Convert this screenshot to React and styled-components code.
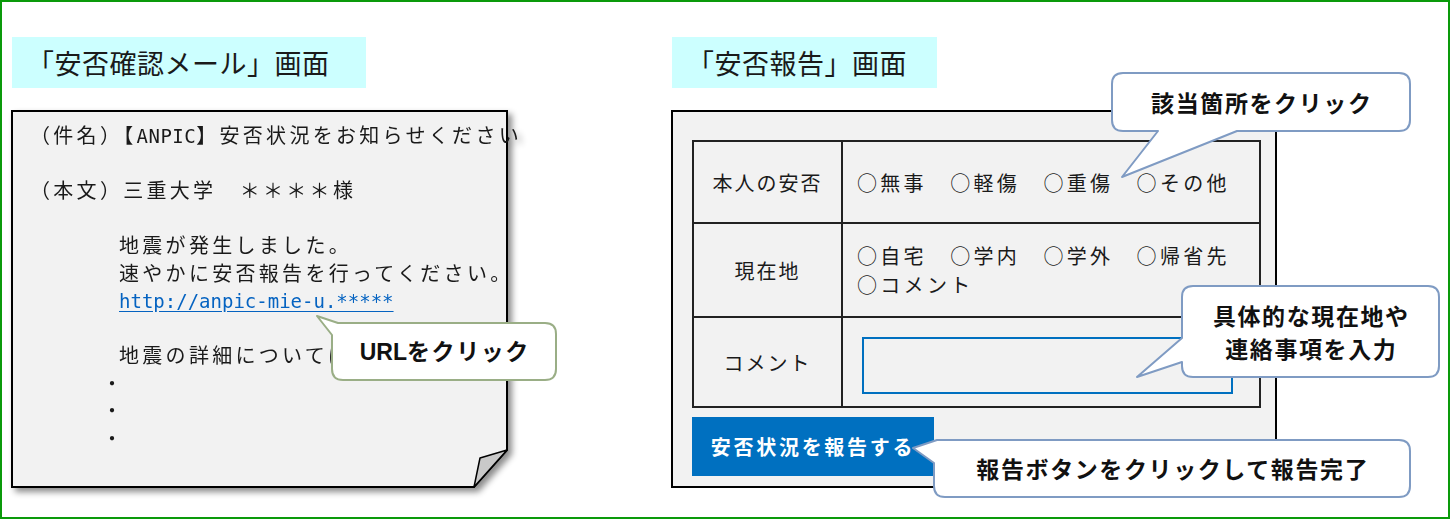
import React from "react";
import styled, { createGlobalStyle } from "styled-components";

const GlobalStyle = createGlobalStyle`
  body {
    margin: 0;
    background: #fff;
    font-family: "Noto Sans CJK JP", "Noto Sans", sans-serif;
    color: #1a1a1a;
  }
`;

const JP = `"Noto Sans CJK JP", "Noto Sans", sans-serif`;

function bubblePath(w, h, r, tail) {
  const { side, a, b, x, y } = tail;
  let d = side === "corner" ? `M ${b} 0` : `M ${r} 0`;
  d += ` L ${w - r} 0 Q ${w} 0 ${w} ${r} L ${w} ${h - r} Q ${w} ${h} ${w - r} ${h}`;
  if (side === "bottom") d += ` L ${b} ${h} L ${x} ${y} L ${a} ${h}`;
  d += ` L ${r} ${h} Q 0 ${h} 0 ${h - r}`;
  if (side === "left") d += ` L 0 ${b} L ${x} ${y} L 0 ${a} L 0 ${r} Q 0 0 ${r} 0 Z`;
  else if (side === "corner") d += ` L 0 ${a} L ${x} ${y} Z`;
  else d += ` L 0 ${r} Q 0 0 ${r} 0 Z`;
  return d;
}

function Bubble({ x, y, w, h, tail, stroke, children }) {
  return (
    <BubbleBox style={{ left: x - 2, top: y - 2, width: w, height: h }}>
      <BubbleShape width={w} height={h}>
        <path d={bubblePath(w, h, 11, tail)} fill="#fff" stroke={stroke} strokeWidth="2" strokeLinejoin="round" />
      </BubbleShape>
      <BubbleText>{children}</BubbleText>
    </BubbleBox>
  );
}

export default function App() {
  return (
    <>
      <GlobalStyle />
      <Frame>
        <Column>
          <Title $w={354}>「安否確認メール」画面</Title>
          <Mail>
            <Paper width="497" height="378">
              <path d="M1 1 L496 1 L496 340 L463 377 L1 377 Z" fill="#f2f2f2" stroke="#000" strokeWidth="2" />
              <path d="M496 340 L469 348 L463 377 Z" fill="#c9c9c9" stroke="#000" strokeWidth="1.5" strokeLinejoin="round" />
            </Paper>
            <MailBody>
              <Line>（件名）【<Mono>ANPIC</Mono>】安否状況をお知らせください</Line>
              <Line />
              <Line>（本文）三重大学　＊＊＊＊様</Line>
              <Line />
              <Line $indent={89}>地震が発生しました。</Line>
              <Line $indent={89}>速やかに安否報告を行ってください。</Line>
              <Line $indent={89}><Link>http://anpic-mie-u.*****</Link></Line>
              <Line />
              <Line $indent={89}>地震の詳細については</Line>
              <Line $indent={72}>・</Line>
              <Line $indent={72}>・</Line>
              <Line $indent={72}>・</Line>
            </MailBody>
          </Mail>
        </Column>

        <Column>
          <Title $w={265}>「安否報告」画面</Title>
          <Panel>
            <Table>
              <Label>本人の安否</Label>
              <Options>○無事　○軽傷　○重傷　○その他</Options>
              <Label>現在地</Label>
              <Options>
                ○自宅　○学内　○学外　○帰省先
                <br />
                ○コメント
              </Options>
              <Label>コメント</Label>
              <InputCell>
                <CommentBox />
              </InputCell>
            </Table>
            <ReportButton>安否状況を報告する</ReportButton>
          </Panel>
        </Column>

        <Bubble x={332} y={323} w={224} h={57} stroke="#9aae86" tail={{ side: "corner", a: 12, b: 6, x: -15, y: -7 }}>
          <Latin>URL</Latin>をクリック
        </Bubble>
        <Bubble x={1112} y={73} w={298} h={58} stroke="#7f9bc3" tail={{ side: "bottom", a: 46, b: 125, x: 10, y: 104 }}>
          該当箇所をクリック
        </Bubble>
        <Bubble x={1182} y={286} w={257} h={91} stroke="#7f9bc3" tail={{ side: "left", a: 52, b: 76, x: -45, y: 91 }}>
          具体的な現在地や
          <br />
          連絡事項を入力
        </Bubble>
        <Bubble x={934} y={440} w={476} h={57} stroke="#7f9bc3" tail={{ side: "corner", a: 23, b: 3, x: -21, y: 8 }}>
          報告ボタンをクリックして報告完了
        </Bubble>
      </Frame>
    </>
  );
}

const Frame = styled.div`
  position: relative;
  width: 1450px;
  height: 519px;
  box-sizing: border-box;
  border: 2px solid #0a9a0a;
  padding: 35px 0 0 9px;
  display: flex;
  gap: 163px;
`;

const Column = styled.div`
  display: flex;
  flex-direction: column;
  align-items: flex-start;
  gap: 22px;
`;

const Title = styled.div`
  width: ${(p) => p.$w}px;
  height: 51px;
  box-sizing: border-box;
  margin-left: 1px;
  padding-left: 15px;
  display: flex;
  align-items: center;
  background: #ccffff;
  font-family: ${JP};
  font-size: 27px;
  letter-spacing: 0.5px;
  color: #1a1a1a;
`;

const Mail = styled.div`
  position: relative;
  width: 497px;
  height: 378px;
  filter: drop-shadow(4px 4px 3px rgba(0, 0, 0, 0.45));
`;

const Paper = styled.svg`
  position: absolute;
  inset: 0;
`;

const MailBody = styled.div`
  position: relative;
  padding: 11px 0 0 19px;
  font-family: ${JP};
  font-size: 20px;
  letter-spacing: 3.3px;
  color: #1a1a1a;
`;

const Line = styled.div`
  height: 27.5px;
  line-height: 27.5px;
  white-space: nowrap;
  padding-left: ${(p) => p.$indent || 0}px;
`;

const Mono = styled.span`
  font-family: "DejaVu Sans Mono", "Liberation Mono", monospace;
  font-size: 19px;
  letter-spacing: 0.5px;
`;

const Link = styled.span`
  font-family: "DejaVu Sans Mono", "Liberation Mono", monospace;
  font-size: 19px;
  letter-spacing: 0;
  color: #0563c1;
  text-decoration: underline;
  text-underline-offset: 3px;
`;

const Panel = styled.div`
  width: 606px;
  height: 378px;
  box-sizing: border-box;
  border: 2px solid #000;
  background: #f2f2f2;
  padding: 28px 0 0 19px;
`;

const Table = styled.div`
  width: 569px;
  box-sizing: border-box;
  border: 2px solid #222;
  background: #222;
  display: grid;
  grid-template-columns: 147px 416px;
  grid-template-rows: 80px 92px 88px;
  gap: 2px;
`;

const Cell = styled.div`
  background: #f2f2f2;
  display: flex;
  align-items: center;
  font-family: ${JP};
  font-size: 20px;
  color: #1a1a1a;
`;

const Label = styled(Cell)`
  justify-content: center;
  letter-spacing: 2px;
`;

const Options = styled(Cell)`
  padding-left: 14px;
  letter-spacing: 3.3px;
  line-height: 29px;
`;

const InputCell = styled(Cell)`
  padding: 0 0 0 19px;
  align-items: flex-start;
  padding-top: 19px;
`;

const CommentBox = styled.div`
  width: 371px;
  height: 57px;
  box-sizing: border-box;
  border: 2px solid #0070c0;
`;

const ReportButton = styled.div`
  width: 242px;
  height: 59px;
  margin-top: 9px;
  background: #0070c0;
  color: #fff;
  display: flex;
  align-items: center;
  justify-content: center;
  font-family: ${JP};
  font-size: 20px;
  font-weight: 700;
  letter-spacing: 2.7px;
`;

const BubbleBox = styled.div`
  position: absolute;
  display: flex;
  align-items: center;
  justify-content: center;
`;

const BubbleShape = styled.svg`
  position: absolute;
  inset: 0;
  overflow: visible;
`;

const BubbleText = styled.div`
  position: relative;
  text-align: center;
  font-family: ${JP};
  font-size: 23px;
  font-weight: 700;
  letter-spacing: 1.6px;
  line-height: 33px;
  color: #111;
  padding-left: 1.6px;
`;

const Latin = styled.span`
  font-family: "Liberation Sans Narrow", "Liberation Sans", sans-serif;
  letter-spacing: 0;
`;
